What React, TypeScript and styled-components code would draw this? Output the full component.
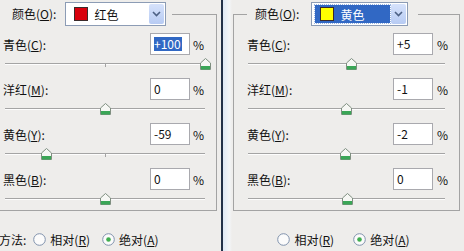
import styled, { createGlobalStyle } from 'styled-components'

const GlobalStyle = createGlobalStyle`
    html, body {
        margin: 0;
        padding: 0;
        background: #eeedeb;
    }
    body {
        font-family: 'Noto Sans CJK SC', 'DejaVu Sans', sans-serif;
        font-size: 12px;
        color: #111;
    }
`

type Row = { name: string; key: string; value: string; selected?: boolean }

const leftRows: Row[] = [
    { name: '青色', key: 'C', value: '+100', selected: true },
    { name: '洋红', key: 'M', value: '0' },
    { name: '黄色', key: 'Y', value: '-59' },
    { name: '黑色', key: 'B', value: '0' },
]

const rightRows: Row[] = [
    { name: '青色', key: 'C', value: '+5' },
    { name: '洋红', key: 'M', value: '-1' },
    { name: '黄色', key: 'Y', value: '-2' },
    { name: '黑色', key: 'B', value: '0' },
]

function Thumb() {
    return (
        <svg width="11" height="12" viewBox="0 0 11 12">
            <path d="M0.5 5 L5.5 0.5 L10.5 5 V11.5 H0.5 Z" fill="#f6f7f4" stroke="#7f8f80" />
            <rect x="1" y="8" width="9" height="3.5" fill="#3aa656" />
        </svg>
    )
}

function Dropdown({ swatch, label, focused }: { swatch: string; label: string; focused?: boolean }) {
    return (
        <Select $w={focused ? 97 : 101}>
            <Current $focused={focused}>
                <Swatch $color={swatch} />
                <span>{label}</span>
            </Current>
            <ArrowBtn>
                <svg width="9" height="6" viewBox="0 0 9 6">
                    <path d="M1 1 L4.5 4.5 L8 1" fill="none" stroke="#4d6185" strokeWidth="1.6" />
                </svg>
            </ArrowBtn>
        </Select>
    )
}

function Panel({
    rows,
    swatch,
    color,
    focused,
    left,
}: {
    rows: Row[]
    swatch: string
    color: string
    focused?: boolean
    left?: boolean
}) {
    // track spans -100..100
    const pos = (v: string) => ((parseFloat(v) + 100) / 200) * 100
    return (
        <Group $left={left}>
            <Legend $left={left}>
                <LegendLabel>
                    颜色(<u>O</u>):
                </LegendLabel>
                <Dropdown swatch={swatch} label={color} focused={focused} />
            </Legend>
            <Rows $left={left}>
                {rows.map((r) => (
                    <RowBox key={r.key}>
                        <InputLine>
                            <Label>
                                {r.name}(<u>{r.key}</u>):
                            </Label>
                            <ValueBox>
                                <ValueText $selected={r.selected}>{r.value}</ValueText>
                            </ValueBox>
                            <Percent $left={left}>%</Percent>
                        </InputLine>
                        <Slider $left={left}>
                            <Track />
                            {left && <Tick />}
                            <ThumbWrap style={{ left: `${pos(r.value)}%` }}>
                                <Thumb />
                            </ThumbWrap>
                        </Slider>
                    </RowBox>
                ))}
            </Rows>
        </Group>
    )
}

function Radio({ checked }: { checked?: boolean }) {
    return (
        <svg width="13" height="13" viewBox="0 0 13 13">
            <circle cx="6.5" cy="6.5" r="5.8" fill="#fbfbfb" stroke="#8193ad" strokeWidth="1" />
            {checked && <circle cx="6.5" cy="6.5" r="2.3" fill="#3fae4f" />}
        </svg>
    )
}

export default function App() {
    return (
        <>
            <GlobalStyle />
            <Screen>
                <Pane $left>
                    <Panel rows={leftRows} swatch="#d8000c" color="红色" left />
                    <MethodRow $left>
                        <span>方法:</span>
                        <RadioItem>
                            <Radio />
                            <span>
                                相对(<u>R</u>)
                            </span>
                        </RadioItem>
                        <RadioItem>
                            <Radio checked />
                            <span>
                                绝对(<u>A</u>)
                            </span>
                        </RadioItem>
                    </MethodRow>
                </Pane>
                <Divider />
                <Pane>
                    <Panel rows={rightRows} swatch="#ffff00" color="黄色" focused />
                    <MethodRow>
                        <RadioItem>
                            <Radio />
                            <span>
                                相对(<u>R</u>)
                            </span>
                        </RadioItem>
                        <RadioItem>
                            <Radio checked />
                            <span>
                                绝对(<u>A</u>)
                            </span>
                        </RadioItem>
                    </MethodRow>
                </Pane>
            </Screen>
        </>
    )
}

const Screen = styled.div`
    width: 464px;
    height: 251px;
    display: flex;
    overflow: hidden;
    background: #eeedeb;
`
const Pane = styled.div<{ $left?: boolean }>`
    width: ${(p) => (p.$left ? '221px' : '232px')};
    flex: none;
    overflow: hidden;
    padding-top: 2px;
    box-sizing: border-box;
    display: flex;
    flex-direction: column;
`
const Divider = styled.div`
    width: 11px;
    flex: none;
    border-left: 2px solid #22314a;
    box-sizing: border-box;
    background: linear-gradient(90deg, #dfe9f6, #f3f5f8 70%, #eeedeb);
`
const Group = styled.fieldset<{ $left?: boolean }>`
    margin: 0;
    margin-left: ${(p) => (p.$left ? '-10px' : '1px')};
    width: 227px;
    box-sizing: border-box;
    border: 1px solid #a3a3a3;
    padding: 0;
    min-width: 0;
`
const Legend = styled.legend<{ $left?: boolean }>`
    margin-left: ${(p) => (p.$left ? '8px' : '13px')};
    padding: ${(p) => (p.$left ? '0 6px 0 13px' : '0 10px 0 8px')};
    height: 24px;
    display: flex;
    align-items: center;
    gap: ${(p) => (p.$left ? '9px' : '12px')};
`
const LegendLabel = styled.span`
    white-space: nowrap;
    line-height: 14px;
`
const Select = styled.div<{ $w: number }>`
    width: ${(p) => p.$w}px;
    height: 24px;
    box-sizing: border-box;
    border: 1px solid #8c9cb5;
    background: #fff;
    display: flex;
    align-items: stretch;
    padding: 1px;
`
const Current = styled.div<{ $focused?: boolean }>`
    flex: 1;
    display: flex;
    align-items: center;
    gap: 6px;
    padding-left: 5px;
    margin: 1px 1px 1px 2px;
    background: ${(p) => (p.$focused ? '#3168c4' : 'transparent')};
    color: ${(p) => (p.$focused ? '#fff' : '#111')};
    outline: ${(p) => (p.$focused ? '1px dotted #99b4e0' : 'none')};
`
const Swatch = styled.span<{ $color: string }>`
    width: 14px;
    height: 14px;
    box-sizing: border-box;
    background: ${(p) => p.$color};
    border: 1px solid #3a2a2a;
`
const ArrowBtn = styled.div`
    width: 15px;
    display: flex;
    align-items: center;
    justify-content: center;
    background: linear-gradient(180deg, #d6e2fb, #b7cbf3);
    border-radius: 2px;
`
const Rows = styled.div<{ $left?: boolean }>`
    display: flex;
    flex-direction: column;
    gap: 3px;
    padding: ${(p) => (p.$left ? '7px 12px 0 12px' : '7px 11px 0 13px')};
`
const RowBox = styled.div`
    display: flex;
    flex-direction: column;
`
const InputLine = styled.div`
    height: 22px;
    display: flex;
    align-items: center;
`
const Label = styled.span`
    flex: 1;
    white-space: nowrap;
`
const ValueBox = styled.div`
    width: 40px;
    height: 22px;
    box-sizing: border-box;
    border: 1px solid #a9a9ae;
    background: #fff;
    display: flex;
    align-items: center;
    padding-left: 3px;
`
const ValueText = styled.span<{ $selected?: boolean }>`
    background: ${(p) => (p.$selected ? '#3168c4' : 'transparent')};
    color: ${(p) => (p.$selected ? '#fff' : '#111')};
    line-height: 14px;
    padding-right: 1px;
`
const Percent = styled.span<{ $left?: boolean }>`
    width: ${(p) => (p.$left ? '14px' : '15px')};
    text-align: right;
`
const Slider = styled.div<{ $left?: boolean }>`
    position: relative;
    height: 20px;
    margin: ${(p) => (p.$left ? '0 -1px 0 2px' : '0 3px 0 1px')};
`
const Track = styled.div`
    position: absolute;
    left: 0;
    right: 0;
    top: 8px;
    height: 1px;
    background: #a4a4a4;
    border-bottom: 1px solid #fdfdfd;
`
const Tick = styled.div`
    position: absolute;
    left: 50%;
    top: 8px;
    width: 1px;
    height: 4px;
    background: #a4a4a4;
`
const ThumbWrap = styled.div`
    position: absolute;
    top: 3px;
    width: 11px;
    height: 12px;
    margin-left: -5px;
    line-height: 0;
`
const MethodRow = styled.div<{ $left?: boolean }>`
    flex: 1;
    display: flex;
    align-items: center;
    justify-content: ${(p) => (p.$left ? 'flex-start' : 'center')};
    gap: ${(p) => (p.$left ? '7px' : '14px')};
    margin-left: ${(p) => (p.$left ? '-1px' : '-4px')};
    padding-top: 17px;
    white-space: nowrap;
`
const RadioItem = styled.label`
    display: flex;
    align-items: center;
    gap: 4px;
    margin-right: 5px;
`
